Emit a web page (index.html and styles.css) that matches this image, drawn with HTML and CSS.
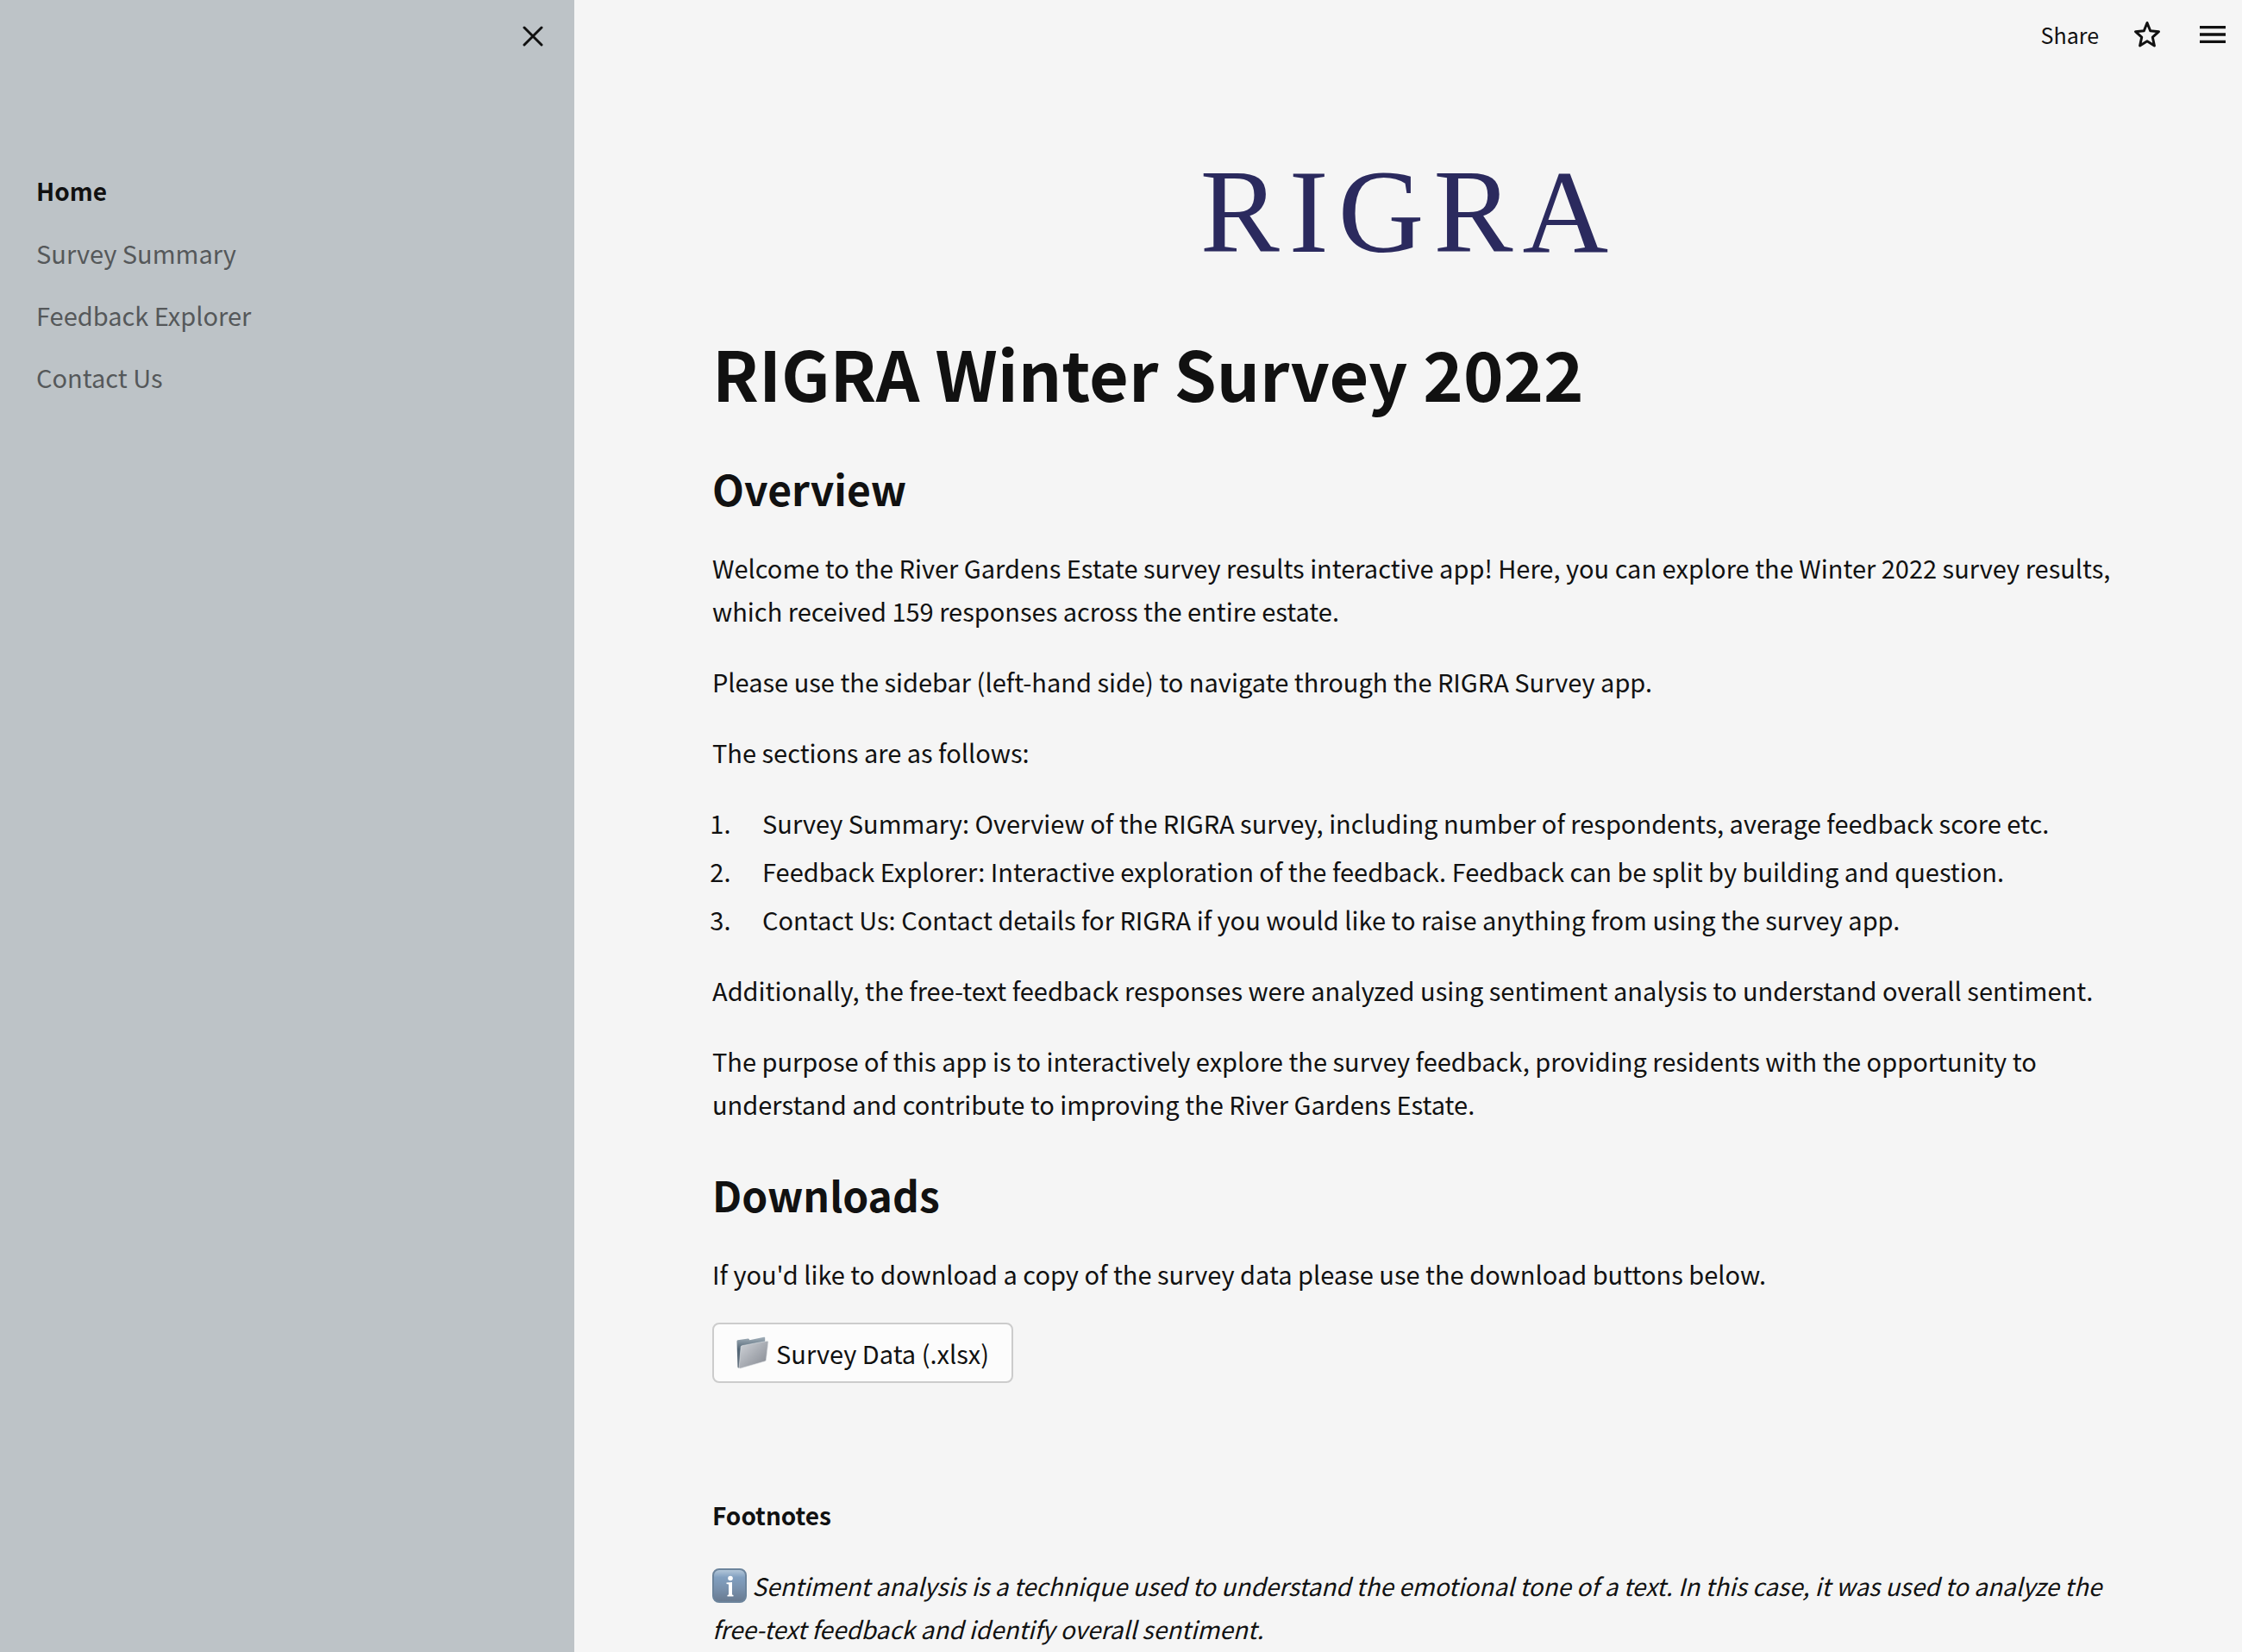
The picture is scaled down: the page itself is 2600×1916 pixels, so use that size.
FILE: index.html
```html
<!DOCTYPE html>
<html lang="en">
<head>
<meta charset="utf-8">
<title>RIGRA Winter Survey 2022</title>
<link rel="stylesheet" href="styles.css">
</head>
<body>
<div class="app">
  <aside class="sidebar">
    <div class="sidebar-top">
      <button class="close" type="button" aria-label="Close sidebar">
        <svg width="24" height="24" viewBox="0 0 24 24" fill="none" stroke="currentColor" stroke-width="3" stroke-linecap="round"><path d="M2 2l20 20M22 2L2 22"/></svg>
      </button>
    </div>
    <nav class="nav" aria-label="Pages">
      <a class="nav-link nav-link-active" href="#home">Home</a>
      <a class="nav-link" href="#summary">Survey Summary</a>
      <a class="nav-link" href="#explorer">Feedback Explorer</a>
      <a class="nav-link" href="#contact">Contact Us</a>
    </nav>
  </aside>
  <div class="page">
    <header class="toolbar">
      <button class="share" type="button">Share</button>
      <button class="icon-button" type="button" aria-label="Add to favorites">
        <svg width="32" height="32" viewBox="0 0 32 32" fill="none" stroke="currentColor" stroke-width="3" stroke-linejoin="round"><path d="M16 2.500l3.700 9.200 9.800 1-7.200 6.500 2.100 9.800-8.400-5.200-8.400 5.200 2.100-9.800-7.200-6.500 9.800-1z"/></svg>
      </button>
      <button class="icon-button" type="button" aria-label="Main menu">
        <svg width="30" height="20" viewBox="0 0 30 20" fill="currentColor"><path d="M0 0h30v3.300H0zM0 8.300h30v3.400H0zM0 16.700h30V20H0z"/></svg>
      </button>
    </header>
    <main class="content">
      <div class="logo">RIGRA</div>
      <h1>RIGRA Winter Survey 2022</h1>
      <h2>Overview</h2>
      <p>Welcome to the River Gardens Estate survey results interactive app! Here, you can explore the Winter 2022 survey results, which received 159 responses across the entire estate.</p>
      <p>Please use the sidebar (left-hand side) to navigate through the RIGRA Survey app.</p>
      <p>The sections are as follows:</p>
      <ol>
        <li>Survey Summary: Overview of the RIGRA survey, including number of respondents, average feedback score etc.</li>
        <li>Feedback Explorer: Interactive exploration of the feedback. Feedback can be split by building and question.</li>
        <li>Contact Us: Contact details for RIGRA if you would like to raise anything from using the survey app.</li>
      </ol>
      <p>Additionally, the free-text feedback responses were analyzed using sentiment analysis to understand overall sentiment.</p>
      <p>The purpose of this app is to interactively explore the survey feedback, providing residents with the opportunity to understand and contribute to improving the River Gardens Estate.</p>
      <h2>Downloads</h2>
      <p>If you'd like to download a copy of the survey data please use the download buttons below.</p>
      <button class="download" type="button">
        <svg width="38" height="38" viewBox="0 0 38 38" aria-hidden="true">
          <defs>
            <linearGradient id="folder-front" x1="0" y1="0" x2="1" y2="1"><stop offset="0" stop-color="#d2d5da"/><stop offset=".5" stop-color="#a9adb4"/><stop offset="1" stop-color="#83878f"/></linearGradient>
            <linearGradient id="folder-back" x1="0" y1="0" x2="0" y2="1"><stop offset="0" stop-color="#a3b0ba"/><stop offset=".4" stop-color="#526575"/><stop offset="1" stop-color="#6b7884"/></linearGradient>
          </defs>
          <path fill="url(#folder-back)" d="M.500 5.500Q.500 4.500 1.500 4.300L13.500 2.500q1-.1 1.300.7l.5 1.100L32 .800q1.200-.2 1.200.8V28L3 36.500q-1.500.3-1.600-1.200z"/>
          <path fill="url(#folder-front)" stroke="#e1e4e8" stroke-width=".6" d="M6.800 10.700L35.500 5.400q1.500-.2 1.400 1.300l-2.500 20.600q-.2 1.100-1.200 1.500L4.700 37q-1.700.4-1.500-1.300l2-23.600q.2-1.200 1.600-1.400z"/>
        </svg>
        <span>Survey Data (.xlsx)</span>
      </button>
      <h3>Footnotes</h3>
      <p class="footnote"><svg class="info" width="40" height="40" viewBox="0 0 40 40" role="img" aria-label="Information">
          <defs><linearGradient id="info-fill" x1="0" y1="0" x2="0" y2="1"><stop offset="0" stop-color="#b8cbdc"/><stop offset=".25" stop-color="#82a0c0"/><stop offset=".6" stop-color="#7890ac"/><stop offset="1" stop-color="#68798f"/></linearGradient></defs>
          <rect x="1" y="1" width="38" height="38" rx="7" fill="url(#info-fill)" stroke="#6c849c" stroke-width="2"/>
          <circle cx="21" cy="11.500" r="2.800" fill="#fff"/>
          <path fill="#fff" d="M16.500 16.500l6.500-.5v14.500l1.500.5v1.500h-7V31l1.500-.5V18.500l-2.500-.5z"/>
        </svg> <em>Sentiment analysis is a technique used to understand the emotional tone of a text. In this case, it was used to analyze the free-text feedback and identify overall sentiment.</em></p>
    </main>
  </div>
</div>
</body>
</html>
```
FILE: styles.css
```css
* { box-sizing: border-box; }

body {
  margin: 0;
  background: #f5f5f5;
  color: #111;
  font-family: "Noto Sans CJK SC", "Noto Sans CJK JP", "Noto Sans", sans-serif;
  font-size: 29px;
  line-height: 50px;
}

button {
  border: 0;
  padding: 0;
  background: none;
  color: inherit;
  font: inherit;
  cursor: pointer;
}

.app {
  display: flex;
  height: 100vh;
}

.sidebar {
  flex: 0 0 666px;
  background: #bdc3c7;
}

.sidebar-top {
  display: flex;
  justify-content: flex-end;
  padding: 30px 36px 0;
}

.close { display: flex; }

.nav {
  display: flex;
  flex-direction: column;
  gap: 22px;
  padding: 142px 42px 0;
}

.nav-link {
  color: #55585a;
  text-decoration: none;
}

.nav-link-active {
  color: #111;
  font-size: 28px;
  font-weight: 600;
}

.page {
  flex: 1;
  min-width: 0;
  overflow: hidden;
}

.toolbar {
  display: flex;
  align-items: center;
  justify-content: flex-end;
  gap: 36px;
  height: 80px;
  padding: 0 14px;
}

.icon-button {
  display: flex;
  justify-content: center;
  width: 40px;
}

.share { font-size: 25px; }

.content {
  padding: 86px 148px 80px 160px;
}

.logo {
  padding-right: 10px;
  color: #2b2a5e;
  font-family: "Liberation Serif", serif;
  font-size: 138px;
  line-height: 160px;
  letter-spacing: 11px;
  text-align: center;
}

h1 {
  margin: 56px 0 0;
  padding-bottom: 4px;
  font-size: 79px;
  font-weight: 700;
  line-height: 100px;
}

h2 {
  margin: 48px 0 35px;
  font-size: 48px;
  font-weight: 600;
  line-height: 64px;
}

h3 {
  margin: 128px 0 32px;
  font-size: 28px;
  font-weight: 600;
  line-height: 50px;
}

p { margin: 0 0 32px; }

ol {
  display: flex;
  flex-direction: column;
  gap: 6px;
  margin: 0 0 32px;
  padding: 0 0 0 28px;
}

li { padding-left: 30px; }

.download {
  display: flex;
  align-items: center;
  gap: 8px;
  height: 70px;
  padding: 0 26px;
  border: 2px solid #ccc;
  border-radius: 8px;
  background: #fcfcfc;
}

.footnote { font-size: 28px; }

.info { vertical-align: -8px; }
```
